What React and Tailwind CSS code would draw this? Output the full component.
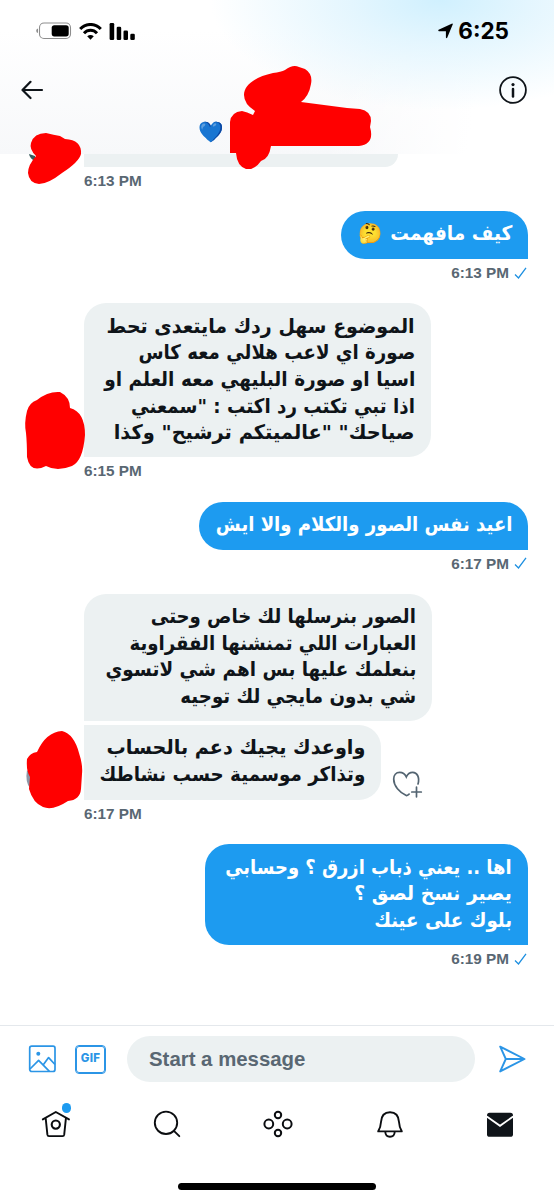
import clsx from 'clsx';

const blocks = {
  first: [
    { text: 'كيف مافهمت', fit: 'scale-x-[.93]' },
  ],
  topic: [
    { text: 'الموضوع سهل ردك مايتعدى تحط', fit: 'scale-x-[.949]' },
    { text: 'صورة اي لاعب هلالي معه كاس', fit: 'scale-x-[.91]' },
    { text: 'اسيا او صورة البليهي معه العلم او', fit: 'scale-x-[.928]' },
    { text: 'اذا تبي تكتب رد اكتب : "سمعني', fit: 'scale-x-[.913]' },
    { text: 'صياحك" "عالميتكم ترشيح" وكذا', fit: 'scale-x-[.969]' },
  ],
  repeat: [
    { text: 'اعيد نفس الصور والكلام والا ايش', fit: 'scale-x-[.903]' },
  ],
  photos: [
    { text: 'الصور بنرسلها لك خاص وحتى', fit: 'scale-x-[.905]' },
    { text: 'العبارات اللي تمنشنها الفقراوية', fit: 'scale-x-[.907]' },
    { text: 'بنعلمك عليها بس اهم شي لاتسوي', fit: 'scale-x-[.919]' },
    { text: 'شي بدون مايجي لك توجيه', fit: 'scale-x-[.91]' },
  ],
  promise: [
    { text: 'واوعدك يجيك دعم بالحساب', fit: 'scale-x-[.961]' },
    { text: 'وتذاكر موسمية حسب نشاطك', fit: 'scale-x-[.916]' },
  ],
  last: [
    { text: 'اها .. يعني ذباب ازرق ؟ وحسابي', fit: 'scale-x-[.896]' },
    { text: 'يصير نسخ لصق ؟', fit: 'scale-x-[.939]' },
    { text: 'بلوك على عينك', fit: 'scale-x-[.913]' },
  ],
};

function Lines({ lines }) {
  return lines.map((line) => (
    <div key={line.text} className="h-[26.7px] whitespace-nowrap">
      <span className={clsx('inline-block origin-right', line.fit)}>{line.text}</span>
    </div>
  ));
}

function Bubble({ sent, className, children }) {
  return (
    <div
      dir="rtl"
      className={clsx(
        "shrink-0 pr-4 font-['DejaVu_Sans',sans-serif] text-[20px] font-bold leading-[26.7px]",
        sent ? 'bg-[#1d9bf0] text-white' : 'bg-[#ecf1f2] text-[#0f1419]',
        className
      )}
    >
      {children}
    </div>
  );
}

function Time({ children, sent }) {
  return (
    <div
      className={clsx(
        "flex h-[29px] items-center font-['Liberation_Sans',sans-serif] text-[15.3px] font-bold text-[#596773]",
        sent && 'justify-end gap-[5px] pr-[1px]'
      )}
    >
      {children}
      {sent && (
        <svg className="mb-[2px] h-3 w-[13px]" viewBox="0 0 13 12" fill="none" stroke="#1d8fe0" strokeWidth="1.3">
          <path d="M1 7.5l3.5 3.5L12 .8" />
        </svg>
      )}
    </div>
  );
}

function StatusBar() {
  return (
    <div className="flex h-[62px] items-center justify-between pl-9 pr-[45px]">
      <div className="flex items-center">
        <svg className="h-[18px] w-[36px]" viewBox="0 0 36 18" fill="none">
          <rect x="3.5" y="1" width="31" height="15.5" rx="4.5" stroke="#8d8d8d" strokeWidth="1.1" />
          <rect x="15.7" y="3.2" width="17" height="11.2" rx="2.6" fill="#000" />
          <path d="M2 6.5Q.2 7 .2 8.8T2 11z" fill="#8d8d8d" />
        </svg>
        <svg className="ml-[7px] h-[17px] w-[23px]" viewBox="0 0 23 17" fill="none" stroke="#000" strokeWidth="3">
          <path d="M1.2 6.1C7-.1 16-.1 21.8 6.1" />
          <path d="M5 10.2c3.7-3.9 9.3-3.9 13 0" />
          <path d="M8.2 13.3q3.3-2.8 6.6 0l-3.3 3.4z" fill="#000" stroke="none" />
        </svg>
        <svg className="ml-[7px] h-[17px] w-[26px]" viewBox="0 0 26 17">
          <rect x=".6" y="0" width="4.6" height="17" rx="1.3" />
          <rect x="7.7" y="3.7" width="4.5" height="13.3" rx="1.3" />
          <rect x="14.5" y="7.4" width="4.5" height="9.6" rx="1.3" />
          <rect x="21.3" y="10.8" width="4.5" height="6.2" rx="1.3" />
        </svg>
      </div>
      <div className="flex items-center gap-[5px]">
        <svg className="h-4 w-[15px]" viewBox="0 0 15 16">
          <path d="M.6 6.8L14.2.5q.8-.1.6.8L9.2 14.7q-.8 1-1.3-.2V8.2H1q-1.2-.5-.4-1.4z" />
        </svg>
        <span className="pt-px font-['Inter',sans-serif] text-[22.5px] font-bold leading-none">6:25</span>
      </div>
    </div>
  );
}

function Header() {
  return (
    <header className="h-[154px] shrink-0 bg-[radial-gradient(ellipse_230px_110px_at_440px_0px,#d0f0fe_0%,#def4fecc_40%,transparent_100%),linear-gradient(100deg,transparent_60%,#fff_85%),linear-gradient(180deg,#fff_20%,#f7f8fa_100%)]">
      <StatusBar />
      <div className="flex h-[55px] items-center justify-between pl-[21px] pr-[27px]">
        <svg className="h-5 w-[23px]" viewBox="0 0 23 20" fill="none" stroke="#0f1419" strokeWidth="2.2" strokeLinecap="round" strokeLinejoin="round">
          <path d="M9.5 1.8L1.5 10l8 8M1.5 10H21" />
        </svg>
        <svg className="h-7 w-7" viewBox="0 0 28 28" fill="none" stroke="#0f1419" strokeWidth="1.8">
          <circle cx="14" cy="14" r="12.9" />
          <circle cx="14" cy="8.6" r="1.6" fill="#0f1419" stroke="none" />
          <path d="M14 13v7.4" strokeWidth="2.5" strokeLinecap="round" />
        </svg>
      </div>
      <div className="pl-[198px] text-[20.5px] leading-[28px]">💙</div>
    </header>
  );
}

function Composer() {
  return (
    <div className="flex h-[68px] shrink-0 items-center border-t border-[#e4e8ec] pb-px pl-7 pr-[28px]">
      <svg className="h-7 w-7" viewBox="0 0 28 28" fill="none" stroke="#2b95e6" strokeWidth="1.7" strokeLinejoin="round">
        <rect x="1.7" y="1.2" width="25.3" height="25.3" rx="2" />
        <circle cx="10.3" cy="8.8" r="2" fill="#2b95e6" stroke="none" />
        <path d="M2 24l8.6-8.6L21.4 26.4M15.5 19.6l5.1-7L27 19.5" />
      </svg>
      <div className="ml-5 flex h-[27px] w-[29px] items-center justify-center rounded-[3px] border-[1.8px] border-[#2b95e6] font-['Inter',sans-serif] text-[11.5px] font-extrabold tracking-[.2px] text-[#2b95e6] outline-[.5px] outline-[#2b95e6]">
        GIF
      </div>
      <div className="ml-[22px] flex h-[46px] w-[348px] items-center rounded-full bg-[#ecf1f2] pl-[22px] font-['Liberation_Sans',sans-serif] text-[20.4px] font-bold text-[#596773]">
        Start a message
      </div>
      <svg className="ml-[24px] h-7 w-[27px]" viewBox="0 0 27 28" fill="none" stroke="#2b95e6" strokeWidth="1.9" strokeLinejoin="round">
        <path d="M1.2 1.600L25.500 14 1.200 26.400 6.800 14zM6.800 14h18.700" />
      </svg>
    </div>
  );
}

function TabBar() {
  return (
    <nav className="flex h-[107px] shrink-0 flex-col items-center">
      <div className="flex h-[62px] w-full items-center justify-between pl-[41px] pr-[40px] text-[#0b0d10]">
        <div className="relative">
          <svg className="h-[30px] w-[30px]" viewBox="0 0 30 30" fill="none" stroke="currentColor" strokeWidth="1.9" strokeLinejoin="round" strokeLinecap="round">
            <path d="M1.800 10.400L14.800 3l13.200 7.400M4.700 9.300l1.700 16.400q.2 1.400 1.600 1.400h13.600q1.400 0 1.600-1.400l1.700-16.400" />
            <circle cx="14.800" cy="15.600" r="4.100" strokeWidth="2.100" />
          </svg>
          <span className="absolute -top-[6px] left-[20.500px] h-[9.500px] w-[9.500px] rounded-full bg-[#1d9bf0]" />
        </div>
        <svg className="h-7 w-7" viewBox="0 0 28 28" fill="none" stroke="currentColor" strokeWidth="1.9" strokeLinecap="round">
          <circle cx="13" cy="12.800" r="11.200" />
          <path d="M20.900 20.800l5.400 5.400" />
        </svg>
        <svg className="mr-px h-[30px] w-[30px]" viewBox="0 0 30 30" fill="none" stroke="currentColor" strokeWidth="2">
          <circle cx="15" cy="6" r="3.200" />
          <circle cx="15" cy="24" r="3.200" />
          <circle cx="5.800" cy="15" r="4.400" />
          <circle cx="24.200" cy="15" r="4.400" />
        </svg>
        <svg className="h-7 w-7" viewBox="0 0 28 28" fill="none" stroke="currentColor" strokeWidth="1.9" strokeLinejoin="round">
          <path d="M2.200 21.400c2-3 2.500-5 2.800-9.400C5.400 5.400 8.600 2.200 14 2.200S22.600 5.400 23 12c.3 4.400.8 6.400 2.800 9.400z" />
          <path d="M9.300 22c.4 6.300 9 6.300 9.400 0" />
        </svg>
        <svg className="h-[25px] w-[28px]" viewBox="0 0 28 25">
          <rect x="1" y=".8" width="26" height="24" rx="2.600" fill="#0f1419" />
          <path d="M.8 4.500L14 13.800 27.200 4.500" fill="none" stroke="#fff" strokeWidth="1.800" />
        </svg>
      </div>
      <div className="mt-[28px] h-[6.500px] w-[198px] rounded-full bg-black" />
    </nav>
  );
}

// red marker strokes hiding the name and the avatars
function Scribbles() {
  return (
    <svg className="pointer-events-none absolute inset-0 h-[1200px] w-[554px]" viewBox="0 0 554 1200" fill="#f00">
      <path d="M29 154l6 2v5q-5-2-6-7z" fill="#35595b" />
      <path d="M27 770q-2 12 3 18l3-10z" fill="#8c96a6" />
      <path d="M244 95C244 85 255 77 273 73Q281 72 285 70Q293 64 299 67L305 69Q313 74 311 84Q309 96 301 102L347 108L360 109Q371 111 371 121L370 127Q375 144 359 146H271Q269 159 261 161Q255 170 246 169Q237 166 236 153H230V122Q231 112 242 111Q247 112 253 115L255 111Q244 104 244 95z" />
      <path d="M36 156Q29 149 31 143Q34 133 46 133Q54 135 60 136L65 139Q82 140 81 154Q79 162 62 173Q48 184 39 184Q29 183 28 173Q28 165 36 156z" />
      <path d="M27 411Q29 403 37 400Q48 391 60 392Q70 397 70 408Q85 412 85 435Q83 461 72 466Q57 472 46 466Q30 474 27 457Q27 443 26 433Q24 423 27 411z" />
      <path d="M37 752Q46 732 62 731Q74 734 79 753Q83 765 82 774L81 789Q80 800 68 801Q53 811 43 807Q33 803 29 789L30 777Q26 771 27 759Q30 753 37 752z" />
    </svg>
  );
}

export default function App() {
  return (
    <div className="relative flex h-[1200px] w-[554px] flex-col overflow-hidden bg-white">
      <Header />
      <main className="flex h-[871px] shrink-0 flex-col pl-[84px] pr-[26px]">
        <div className="h-[12.500px] w-[314px] shrink-0 rounded-br-[22px] bg-[#ecf1f2]" />
        <Time>6:13 PM</Time>

        <Bubble sent className="mt-[15.500px] flex h-[48px] w-[187px] self-end rounded-[24px] rounded-br-none pt-[9px]">
          <Lines lines={blocks.first} />
          <span className="-mr-[1px] pt-px text-[19.500px] font-normal">🤔</span>
        </Bubble>
        <Time sent>6:13 PM</Time>

        <Bubble className="mt-[15px] h-[154px] w-[347px] rounded-[22px] rounded-bl-none pt-[9.500px]">
          <Lines lines={blocks.topic} />
        </Bubble>
        <Time>6:15 PM</Time>

        <Bubble sent className="mt-[15.500px] h-[48px] w-[329px] self-end rounded-[24px] rounded-br-none pt-[9px]">
          <Lines lines={blocks.repeat} />
        </Bubble>
        <Time sent>6:17 PM</Time>

        <Bubble className="mt-[15.500px] h-[127px] w-[348px] rounded-[22px] rounded-bl-none pt-[9px]">
          <Lines lines={blocks.photos} />
        </Bubble>
        <div className="mt-[4px] flex h-[75px] shrink-0 items-end gap-[11px]">
          <Bubble className="h-[75px] w-[297px] rounded-[22px] rounded-l-none pt-[9px]">
            <Lines lines={blocks.promise} />
          </Bubble>
          <svg className="h-[30px] w-[31px]" viewBox="0 0 31 30" fill="none" stroke="#536471" strokeWidth="1.700" strokeLinecap="round">
            <path d="M26 14C28 6.800 24.800 2.400 20.800 2.400c-3.300 0-5.400 2-6.500 4.600-1.200-2.600-3.300-4.600-6.600-4.600-3.700 0-6 2.700-6 6.700 0 7 5.800 13.400 12.600 16.500q1.200 0 2.800-1.500M19.800 22h9.500M24.500 17.200v9.600" />
          </svg>
        </div>
        <Time>6:17 PM</Time>

        <Bubble sent className="mt-[15px] h-[101px] w-[323px] self-end rounded-[24px] rounded-br-none pt-[9.500px]">
          <Lines lines={blocks.last} />
        </Bubble>
        <Time sent>6:19 PM</Time>
      </main>
      <Composer />
      <TabBar />
      <Scribbles />
    </div>
  );
}
